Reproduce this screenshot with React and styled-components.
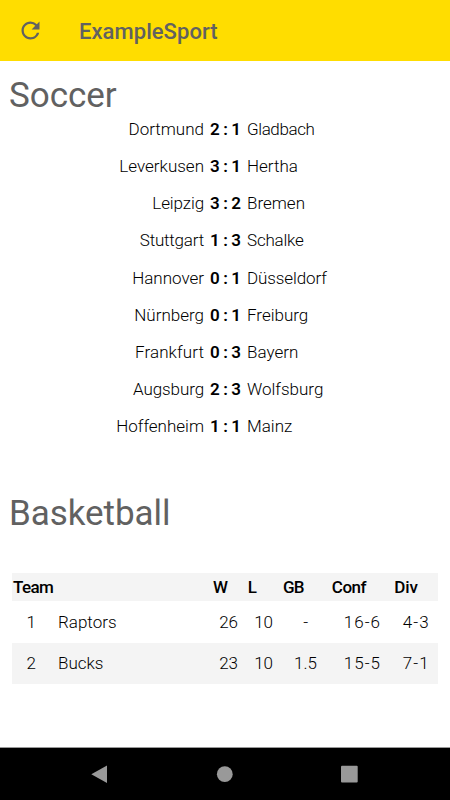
import styled, { createGlobalStyle } from "styled-components";
import { MdRefresh } from "react-icons/md";

const GlobalStyle = createGlobalStyle`
  * {
    box-sizing: border-box;
  }
  body {
    margin: 0;
    background-color: white;
    font-family: Roboto, sans-serif;
  }
`;

const Screen = styled.div`
  width: 450px;
  height: 800px;
  display: flex;
  flex-direction: column;
  overflow: hidden;
`;

const AppBar = styled.header`
  height: 61px;
  flex-shrink: 0;
  display: flex;
  align-items: center;
  gap: 35px;
  padding-left: 17px;
  background-color: #ffdd00;
  color: #616161;
`;

const RefreshButton = styled.button`
  display: flex;
  padding: 0;
  border: none;
  background: none;
  color: inherit;
  font-size: 27px;
`;

const AppTitle = styled.h1`
  margin: 2px 0 0;
  font-size: 22px;
  font-weight: 500;
  letter-spacing: 0.05px;
`;

const Content = styled.main`
  flex: 1;
`;

const SectionTitle = styled.h2`
  margin: 0;
  height: ${(props) => props.$height}px;
  padding: ${(props) => props.$top || 0}px 0 0 9px;
  font-size: 35px;
  line-height: 42px;
  font-weight: 400;
  letter-spacing: -0.05px;
  color: #616161;
`;

const MatchList = styled.div`
  height: 381px;
`;

const Match = styled.div`
  height: 37.15px;
  display: grid;
  grid-template-columns: 204px 43px 1fr;
  line-height: 37px;
  font-size: 17px;
  font-weight: 300;
  color: black;
`;

const TeamName = styled.span`
  text-align: ${(props) => props.$align || "left"};
  letter-spacing: ${(props) => props.$spacing || 0}px;
  white-space: nowrap;
`;

const Score = styled.span`
  display: flex;
  justify-content: space-between;
  padding: 0 6px;
  font-weight: 600;
`;

const Table = styled.table`
  width: 426px;
  margin-left: 12px;
  border-collapse: collapse;
  table-layout: fixed;
  font-size: 17px;
  color: black;
`;

const HeadRow = styled.tr`
  height: 28px;
  background-color: #f4f4f4;
`;

const Row = styled.tr`
  height: 41.5px;
  background-color: ${(props) => (props.$shaded ? "#f4f4f4" : "white")};
`;

const HeadCell = styled.th`
  padding: 0 ${(props) => props.$right || 0}px 0 ${(props) => props.$left || 0}px;
  text-align: ${(props) => props.$align || "right"};
  font-weight: 500;
  white-space: nowrap;
  letter-spacing: ${(props) => props.$spacing || 0}px;
`;

const Cell = styled.td`
  padding: 0 ${(props) => props.$right || 0}px 0 0;
  text-align: ${(props) => props.$align || "right"};
  font-weight: 300;
  white-space: nowrap;
  letter-spacing: ${(props) => props.$spacing || 0}px;
`;

const NavBar = styled.footer`
  height: 53px;
  flex-shrink: 0;
  display: grid;
  grid-template-columns: 162px 126px 162px;
  align-items: center;
  background-color: black;
  border-top: 1px solid #999;
`;

const NavIcon = styled.svg`
  width: 20px;
  height: 20px;
  fill: #999;
  justify-self: ${(props) => props.$justify || "center"};
  margin: 0 ${(props) => props.$right || 0}px 0 ${(props) => props.$left || 0}px;
`;

const matches = [
  { home: "Dortmund", away: "Gladbach", score: [2, 1], awaySpacing: -0.4 },
  { home: "Leverkusen", away: "Hertha", score: [3, 1] },
  { home: "Leipzig", away: "Bremen", score: [3, 2], homeSpacing: -0.1 },
  { home: "Stuttgart", away: "Schalke", score: [1, 3], homeSpacing: -0.2, awaySpacing: -0.2 },
  { home: "Hannover", away: "Düsseldorf", score: [0, 1], awaySpacing: -0.1 },
  { home: "Nürnberg", away: "Freiburg", score: [0, 1] },
  { home: "Frankfurt", away: "Bayern", score: [0, 3], homeSpacing: 0.1 },
  { home: "Augsburg", away: "Wolfsburg", score: [2, 3], homeSpacing: -0.1 },
  { home: "Hoffenheim", away: "Mainz", score: [1, 1] },
];

const standings = [
  { rank: 1, team: "Raptors", w: 26, l: 10, gb: "-", conf: "16-6", div: "4-3" },
  { rank: 2, team: "Bucks", w: 23, l: 10, gb: "1.5", conf: "15-5", div: "7-1" },
];

const App = () => {
  return (
    <>
      <GlobalStyle />
      <Screen>
        <AppBar>
          <RefreshButton type="button" aria-label="Refresh">
            <MdRefresh />
          </RefreshButton>
          <AppTitle>ExampleSport</AppTitle>
        </AppBar>
        <Content>
          <SectionTitle $height={50} $top={14}>
            Soccer
          </SectionTitle>
          <MatchList>
            {matches.map((m) => (
              <Match key={m.home}>
                <TeamName $align="right" $spacing={m.homeSpacing}>
                  {m.home}
                </TeamName>
                <Score>
                  <span>{m.score[0]}</span>
                  <span>:</span>
                  <span>{m.score[1]}</span>
                </Score>
                <TeamName $spacing={m.awaySpacing}>{m.away}</TeamName>
              </Match>
            ))}
          </MatchList>
          <SectionTitle $height={81} $top={1}>
            Basketball
          </SectionTitle>
          <Table>
            <colgroup>
              <col width="46" />
              <col width="136" />
              <col width="46" />
              <col width="35" />
              <col width="50" />
              <col width="56" />
              <col width="57" />
            </colgroup>
            <thead>
              <HeadRow>
                <HeadCell colSpan={2} $align="left" $left={1} $spacing={-0.6}>
                  Team
                </HeadCell>
                <HeadCell $right={12}>W</HeadCell>
                <HeadCell $right={18}>L</HeadCell>
                <HeadCell $right={21} $spacing={-0.6}>
                  GB
                </HeadCell>
                <HeadCell $right={15} $spacing={-0.5}>
                  Conf
                </HeadCell>
                <HeadCell $right={20}>Div</HeadCell>
              </HeadRow>
            </thead>
            <tbody>
              {standings.map((s) => (
                <Row key={s.team} $shaded={s.rank % 2 === 0}>
                  <Cell $right={22}>{s.rank}</Cell>
                  <Cell $align="left">{s.team}</Cell>
                  <Cell $right={2}>{s.w}</Cell>
                  <Cell $right={2}>{s.l}</Cell>
                  <Cell $right={s.gb === "-" ? 17 : 8}>{s.gb}</Cell>
                  <Cell $spacing={1}>{s.conf}</Cell>
                  <Cell $right={8} $spacing={1.2}>
                    {s.div}
                  </Cell>
                </Row>
              ))}
            </tbody>
          </Table>
        </Content>
        <NavBar>
          <NavIcon $justify="end" $right={52} viewBox="0 0 20 20">
            <path d="M17 1.5v17.5L1.3 10.2z" />
          </NavIcon>
          <NavIcon viewBox="0 0 20 20">
            <circle cx="9.8" cy="10.2" r="7.9" />
          </NavIcon>
          <NavIcon $justify="start" $left={51} viewBox="0 0 20 20">
            <rect x="2" y="1.7" width="16.7" height="16.7" rx="1" />
          </NavIcon>
        </NavBar>
      </Screen>
    </>
  );
};

export default App;
